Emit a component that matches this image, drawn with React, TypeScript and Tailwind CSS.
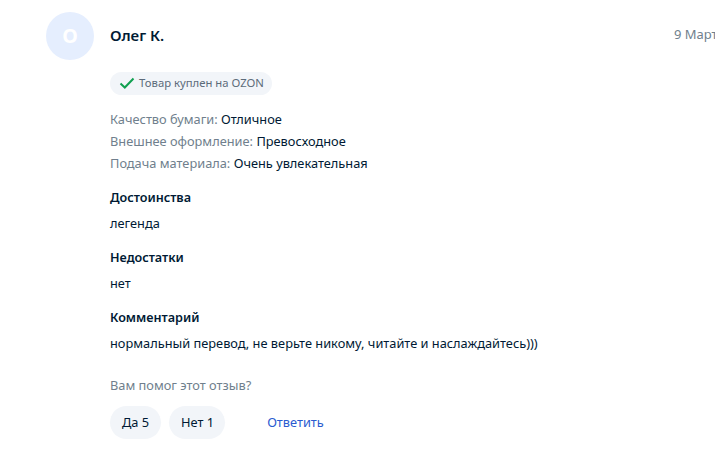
export default function App() {
  const font = { fontFamily: '"Noto Sans", sans-serif' };
  return (
    <div className="w-[715px] h-[459px] overflow-hidden bg-white flex pl-[46px] pt-[12px] text-[#001a34] text-[12.8px]" style={font}>
      <div className="w-[48px] h-[48px] rounded-full bg-[#e5eefe] flex items-center justify-center text-white text-[20px] font-bold shrink-0">О</div>
      <div className="ml-[16px] flex-1 min-w-0">
        <div className="flex items-start justify-between h-[48px]">
          <div className="text-[15px] font-semibold leading-[20px] mt-[13px]">Олег К.</div>
          <div className="text-[13px] leading-[20px] mt-[12px] text-[#707f8d] w-[41px] overflow-hidden whitespace-nowrap shrink-0">9 Марта</div>
        </div>
        <div className="mt-[12px] flex">
          <div className="flex items-center h-[23px] rounded-full bg-[#f2f5f9] pl-[9px] pr-[8px] text-[11.3px] text-[#5c6b7a]">
            <svg width="16" height="14" viewBox="0 0 16 14" className="mr-[4px]" fill="none"><path d="M1.5 6.5 L5.8 10.5 L14.5 1.5" stroke="#10a050" strokeWidth="2" /></svg>
            Товар куплен на OZON
          </div>
        </div>
        <div className="mt-[13px] leading-[22px] text-[#707f8d]">
          <div>Качество бумаги: <span className="text-[#001a34]">Отличное</span></div>
          <div>Внешнее оформление: <span className="text-[#001a34]">Превосходное</span></div>
          <div>Подача материала: <span className="text-[#001a34]">Очень увлекательная</span></div>
        </div>
        <div className="mt-[14px] font-semibold leading-[20px] text-[12.6px]">Достоинства</div>
        <div className="mt-[5px] leading-[20px]">легенда</div>
        <div className="mt-[15px] font-semibold leading-[20px] text-[12.6px]">Недостатки</div>
        <div className="mt-[5px] leading-[20px]">нет</div>
        <div className="mt-[15px] font-semibold leading-[20px] text-[12.6px]">Комментарий</div>
        <div className="mt-[5px] leading-[20px]">нормальный перевод, не верьте никому, читайте и наслаждайтесь)))</div>
        <div className="mt-[22px] leading-[20px] text-[#707f8d]">Вам помог этот отзыв?</div>
        <div className="mt-[11px] flex items-center">
          <div className="h-[33px] rounded-full bg-[#f2f5f9] px-[12px] flex items-center">Да 5</div>
          <div className="ml-[8px] h-[33px] rounded-full bg-[#f2f5f9] pl-[12px] pr-[11px] flex items-center">Нет 1</div>
          <div className="ml-[42px] text-[#2a5bd0]">Ответить</div>
        </div>
      </div>
    </div>
  );
}
